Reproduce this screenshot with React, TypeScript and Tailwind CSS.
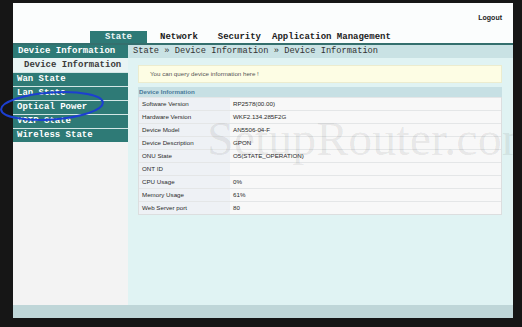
const menu = ["Wan State", "Lan State", "Optical Power", "VOIP State", "Wireless State"];

const rows: [string, string][] = [
  ["Software Version", "RP2578(00.00)"],
  ["Hardware Version", "WKF2.134.285F2G"],
  ["Device Model", "AN5506-04-F"],
  ["Device Description", "GPON"],
  ["ONU State", "O5(STATE_OPERATION)"],
  ["ONT ID", ""],
  ["CPU Usage", "0%"],
  ["Memory Usage", "61%"],
  ["Web Server port", "80"],
];

export default function App() {
  return (
    <div className="relative w-[522px] h-[327px] bg-[#161616] pt-[3px] pl-[13px] pr-[9px] pb-[9px] overflow-hidden">
      <div className="flex flex-col w-[500px] h-[315px] bg-[#fbfdfd]">
        {/* top bar */}
        <header className="h-[28px] flex items-center justify-end pr-[11px] pt-[2px]">
          <span className="font-['Liberation_Sans',Arial,sans-serif] text-[7px] font-bold text-[#222]">Logout</span>
        </header>

        {/* tabs */}
        <nav className="h-[14px] flex border-b-2 border-[#346f6d] font-['Liberation_Mono',monospace] text-[9px] leading-[12px] font-bold text-[#1c1c1c]">
          <div className="w-[77px]" />
          <div className="w-[57px] bg-[#2e7a76] text-[#eef7f6] flex items-center justify-center">State</div>
          <div className="ml-[13px] flex items-center">Network</div>
          <div className="ml-[20px] flex items-center">Security</div>
          <div className="ml-[11px] flex items-center">Application Management</div>
        </nav>

        <div className="flex h-[260px]">
          {/* left menu */}
          <aside className="w-[115px] bg-[#f3f3f3] font-['Liberation_Mono',monospace] text-[9px] font-bold">
            <div className="h-[13px] leading-[13px] bg-[#2e7a76] text-white pl-[5px]">Device Information</div>
            <div className="h-[14px] leading-[14px] bg-[#e9f4f4] text-[#3a3a3a] pl-[11px]">Device Information</div>
            {menu.map((m) => (
              <div key={m} className="h-[14px] leading-[13px] border-t border-[#d3e6e5] bg-[#2e7a76] text-white pl-[4px]">
                {m}
              </div>
            ))}
          </aside>

          {/* content */}
          <main className="relative flex-1 bg-[#e0f3f3] overflow-hidden">
            <div className="h-[13px] leading-[13px] bg-[#c9e2e4] pl-[5px] font-['Liberation_Mono',monospace] text-[8.7px] text-[#333]">
              State » Device Information » Device Information
            </div>

            <div className="font-['Liberation_Sans',Arial,sans-serif] ml-[10px] mr-[11px]">
              <div className="mt-[7px] h-[18px] bg-[#fdfde4] border border-[#ececcf] pl-[11px] flex items-center text-[6.2px] text-[#555]">
                You can query device information here !
              </div>

              <div className="mt-[4px] h-[10px] leading-[10px] bg-[#c7e0e4] pl-[1px] text-[6.2px] font-bold text-[#4a7a9a]">
                Device Information
              </div>

              <div className="border-x border-b border-[#dcdedf]">
                {rows.map(([k, v]) => (
                  <div key={k} className="grid grid-cols-[91px_1fr] h-[13px] border-t border-[#e4e6e7] text-[6.2px] text-[#2a2a2a]">
                    <div className="bg-[#eef1f5] pl-[3px] flex items-center">{k}</div>
                    <div className="bg-[#f8f8f8] pl-[3px] flex items-center">{v}</div>
                  </div>
                ))}
              </div>
            </div>

            <div className="absolute left-[79px] top-[70px] whitespace-nowrap pointer-events-none font-['Liberation_Serif',serif] text-[48px] leading-none text-black/[0.08]">
              SetupRouter.com
            </div>
          </main>
        </div>

        <footer className="h-[13px] bg-[#bfd6d8]" />
      </div>

      {/* hand-drawn annotation */}
      <svg className="absolute left-0 top-0 pointer-events-none" width="522" height="327">
        <ellipse cx="52" cy="106" rx="51" ry="13.5" transform="rotate(-4 52 106)" fill="none" stroke="#1c3fd0" strokeWidth="2" />
      </svg>
    </div>
  );
}
